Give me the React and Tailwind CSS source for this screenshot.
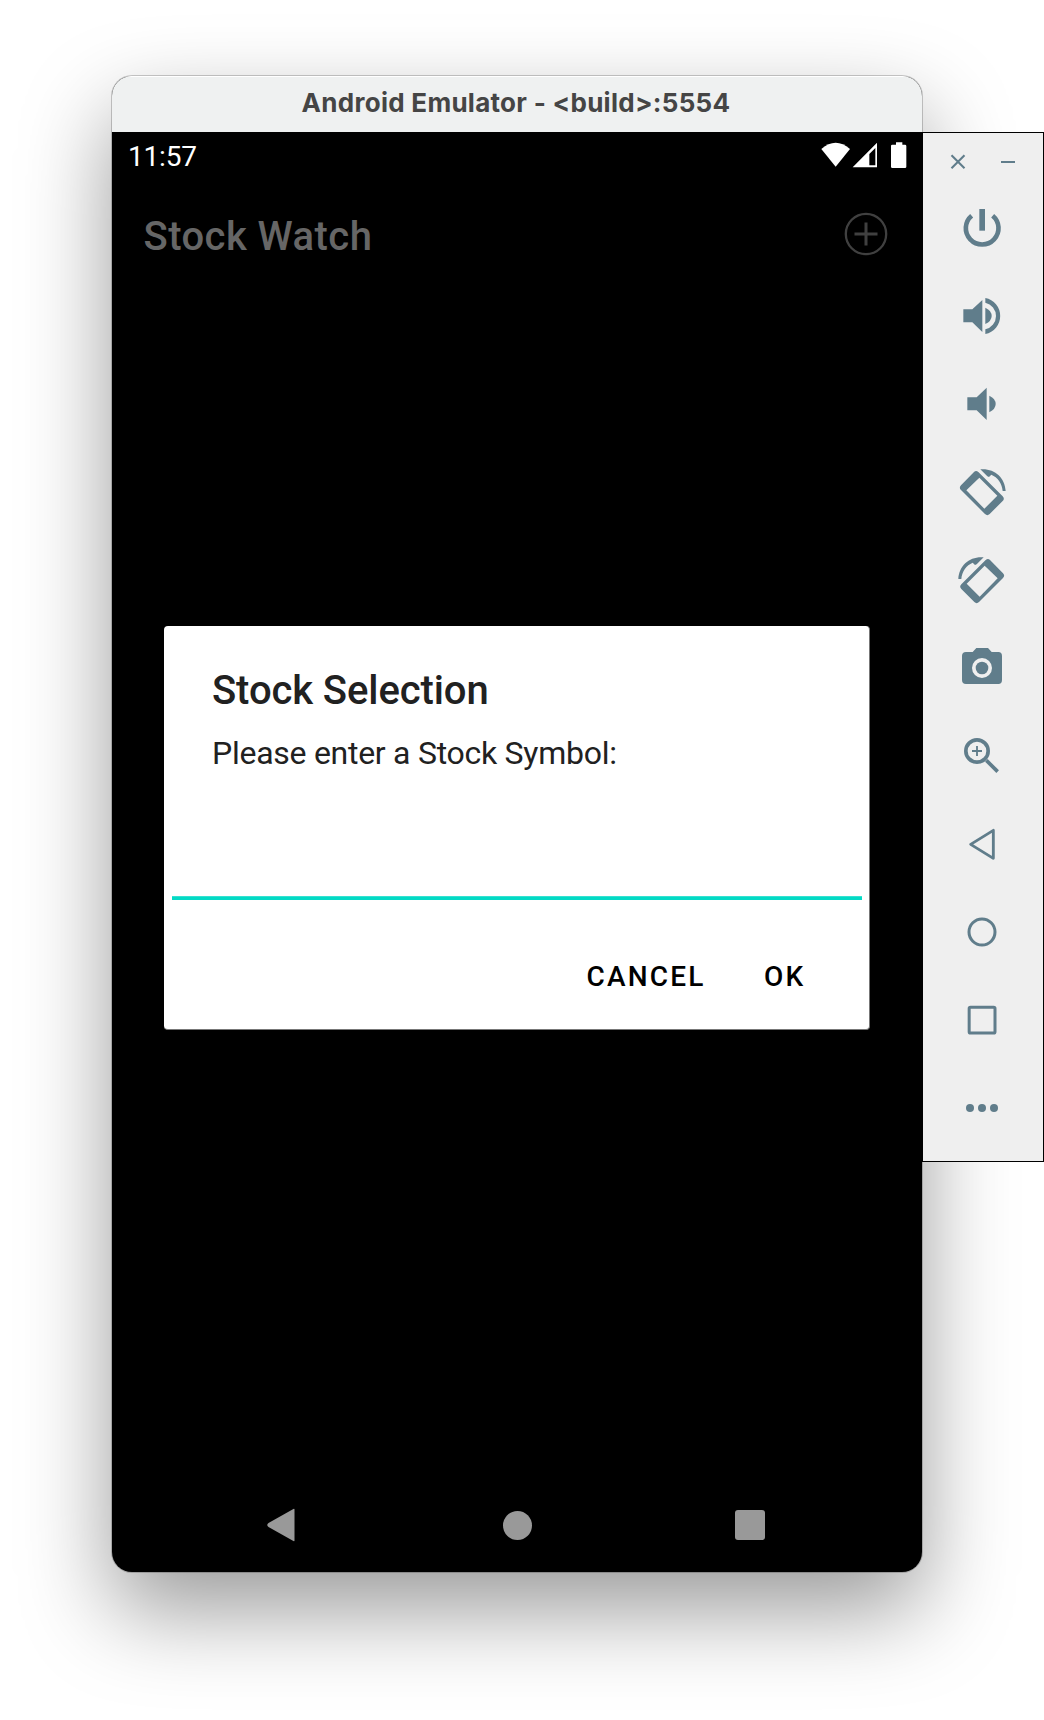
import React from "react";

function ToolIcon({ children }) {
  return (
    <button className="flex h-[88px] w-full items-center justify-center pr-[2px] text-[#607d8b]">
      <svg width="60" height="60" viewBox="0 0 180 180" fill="currentColor">
        {children}
      </svg>
    </button>
  );
}

function RotateShape() {
  return (
    <>
      <path
        fillRule="evenodd"
        d="M66 30 Q72 24 79 30 L152 103 Q159 110 152 117 L113 156 Q106 163 99 156 L27 84 Q20 77 27 70 Z M82 47 L43 85 L97 140 L136 101 Z"
      />
      <path d="M85 22 C126 18 159 46 161 87 L152 87 C150 64 137 46 118 38 L111 45 L106 43 Z" />
    </>
  );
}

function Toolbar() {
  return (
    <aside className="mt-[56px] h-[1030px] w-[122px] border border-black bg-[#efefef]">
      <div className="flex h-[51px] items-center pt-[7px] pl-[27px] text-[#607d8b]">
        <svg width="16" height="16" viewBox="0 0 16 16" fill="none" stroke="currentColor" strokeWidth="2.1">
          <path d="M1.5 1.2L14.5 14.2M14.5 1.2L1.5 14.2" />
        </svg>
        <span className="ml-[35px] h-[2px] w-[14px] bg-[#607d8b]" />
      </div>
      <ToolIcon>
        <path d="M59 53 A49 49 0 1 0 122 53" fill="none" stroke="currentColor" strokeWidth="14" />
        <rect x="82" y="33" width="17" height="65" />
      </ToolIcon>
      <ToolIcon>
        <path d="M34 70H61L91 42V138L61 109H34Z" />
        <path d="M100 65Q119 74 119 90Q119 105 100 114Z" />
        <path d="M100 36A55 55 0 0 1 100 144V130A41 41 0 0 0 100 50Z" />
      </ToolIcon>
      <ToolIcon>
        <path d="M46 70H74L104 41V138L74 109H46Z" />
        <path d="M112 65Q131 74 131 90Q131 105 112 115Z" />
      </ToolIcon>
      <ToolIcon>
        <RotateShape />
      </ToolIcon>
      <ToolIcon>
        <g transform="matrix(-1 0 0 1 180 0)">
          <RotateShape />
        </g>
      </ToolIcon>
      <ToolIcon>
        <path
          fillRule="evenodd"
          d="M73 30H108L119 42H139Q150 42 150 54V126Q150 138 139 138H42Q30 138 30 126V54Q30 42 42 42H62Z M90 60A30 30 0 1 0 90 120A30 30 0 1 0 90 60Z"
        />
        <circle cx="90" cy="90" r="19" />
      </ToolIcon>
      <ToolIcon>
        <g fill="none" stroke="currentColor">
          <circle cx="75" cy="75" r="33.5" strokeWidth="11" />
          <path d="M75 60V90M60 75H90" strokeWidth="5.5" />
          <path d="M103 103L137 137" strokeWidth="11" />
        </g>
      </ToolIcon>
      <ToolIcon>
        <path d="M124 49V133L56 91Z" fill="none" stroke="currentColor" strokeWidth="8.5" strokeLinejoin="round" />
      </ToolIcon>
      <ToolIcon>
        <circle cx="90" cy="90" r="39" fill="none" stroke="currentColor" strokeWidth="9" />
      </ToolIcon>
      <ToolIcon>
        <rect x="51.5" y="51.5" width="77.5" height="77.5" rx="4" fill="none" stroke="currentColor" strokeWidth="9" />
      </ToolIcon>
      <ToolIcon>
        <circle cx="54" cy="90" r="12" />
        <circle cx="90" cy="90" r="12" />
        <circle cx="126" cy="90" r="12" />
      </ToolIcon>
    </aside>
  );
}

function StatusBar() {
  return (
    <div className="flex h-[50px] items-center justify-between pr-[15px] pl-[16px] text-white">
      <span className="text-[28px] leading-[50px] tracking-[-0.2px]">11:57</span>
      <svg width="86" height="26" viewBox="0 0 258 78" fill="#fff" className="mb-1">
        <path d="M1 21Q44 -16 87 21L44 74Z" />
        <path fillRule="evenodd" d="M95 76L168 2V76Z M145 36V70H163V18Z" />
        <path d="M225 1H244V8H252Q256 8 256 12V74Q256 78 252 78H214Q210 78 210 74V12Q210 8 214 8H225Z" />
      </svg>
    </div>
  );
}

function Dialog() {
  return (
    <section className="ml-[52px] mt-[358px] flex h-[404px] w-[706px] flex-col rounded-[4px] border-r border-b border-[#777] bg-white">
      <h2 className="mt-[41px] ml-[48px] text-[40px] leading-[48px] font-medium tracking-[-0.1px] text-[#212121]">
        Stock Selection
      </h2>
      <p className="mt-[18px] ml-[48px] text-[32px] leading-[40px] tracking-[-0.27px] text-[#212121]">
        Please enter a Stock Symbol:
      </p>
      <div className="mr-[7px] ml-[8px] mt-[123px] h-[4px] border-t border-[#35e1d0] bg-[#03dac5]" />
      <div className="mt-[57px] flex h-[40px] justify-end pr-[63.5px] text-[28px] leading-[40px] font-medium tracking-[2.2px] text-black">
        <button>CANCEL</button>
        <button className="ml-[58.5px]">OK</button>
      </div>
    </section>
  );
}

function Phone() {
  return (
    <main className="flex h-[1496px] w-[810px] flex-col overflow-hidden rounded-[20px] bg-black font-[Roboto,sans-serif] shadow-[0_0_0_1px_rgba(0,0,0,0.2),0_38px_90px_rgba(0,0,0,0.4)]">
      <header className="h-[56px] border-t border-white bg-[#eff1f1] pr-[2px] text-center font-[Inter,sans-serif] text-[26px] leading-[51px] font-bold tracking-[0.28px] text-[#454545]">
        Android Emulator - &lt;build&gt;:5554
      </header>
      <StatusBar />
      <div className="mt-[22px] flex h-[64px] items-center justify-between pr-[34px] pl-[31.5px]">
        <h1 className="pt-[2px] text-[40px] leading-[62px] font-medium tracking-[0.44px] text-[#666]">Stock Watch</h1>
        <svg width="44" height="44" viewBox="0 0 44 44" fill="none" stroke="#404040" strokeWidth="2.3" className="mb-[4px]">
          <circle cx="22" cy="22" r="20.2" />
          <path d="M22 10.5V33.5M10.5 22H33.5" strokeWidth="3" />
        </svg>
      </div>
      <Dialog />
      <nav className="mt-auto flex h-[94px] items-center pl-[154px]">
        <svg width="30" height="34" viewBox="0 0 30 34" fill="#999">
          <path d="M28.5 1.5V32.5Q28.5 34 26.5 32.5L2.5 19Q0 17 2.5 15L26.5 1.5Q28.5 .2 28.5 1.5Z" />
        </svg>
        <span className="ml-[206.5px] h-[29px] w-[29px] rounded-full bg-[#999]" />
        <span className="ml-[203.5px] h-[30px] w-[30px] rounded-[3px] bg-[#999]" />
      </nav>
    </main>
  );
}

export default function App() {
  return (
    <div className="flex h-[1720px] w-[1044px] items-start overflow-hidden bg-white pt-[76px] pl-[112px]">
      <Phone />
      <div className="relative">
        <Toolbar />
      </div>
    </div>
  );
}
